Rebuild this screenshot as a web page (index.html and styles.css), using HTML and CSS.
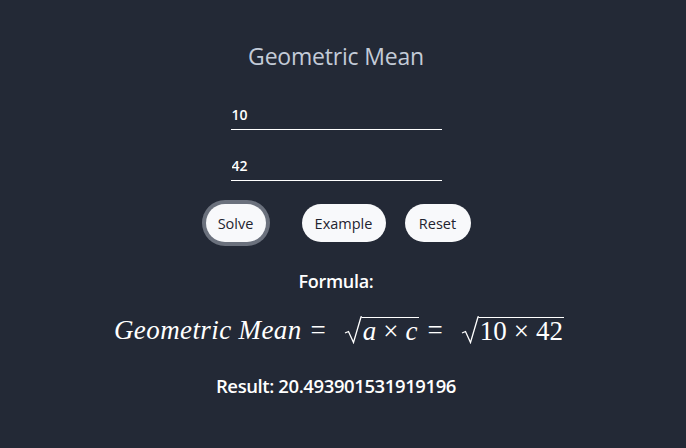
FILE: index.html
```html
<!DOCTYPE html>
<html>
<head>
<meta charset="utf-8">
<link rel="stylesheet" href="styles.css">
</head>
<body>
<main class="app">
  <h1 class="title">Geometric Mean</h1>
  <div class="fields">
    <input class="field" type="text" value="10">
    <input class="field" type="text" value="42">
  </div>
  <div class="actions">
    <button class="btn btn-focus">Solve</button>
    <button class="btn btn-example">Example</button>
    <button class="btn btn-reset">Reset</button>
  </div>
  <h2 class="formula-label">Formula:</h2>
  <div class="math">
    <span class="mi word">Geometric</span><span class="sp"></span><span class="mi word">Mean</span>
    <span class="rel">=</span>
    <span class="sqrt"><svg class="rad" viewBox="0 0 18 28" width="18" height="28"><path d="M1 17 L4.5 15.5 L9.5 26.5 L17 1 L18 1" fill="none" stroke="#fff" stroke-width="1.3"/></svg><span class="radicand"><span class="mi">a</span><span class="bin">×</span><span class="mi">c</span></span></span>
    <span class="rel">=</span>
    <span class="sqrt"><svg class="rad" viewBox="0 0 18 28" width="18" height="28"><path d="M1 17 L4.5 15.5 L9.5 26.5 L17 1 L18 1" fill="none" stroke="#fff" stroke-width="1.3"/></svg><span class="radicand"><span class="mn">10</span><span class="bin">×</span><span class="mn">42</span></span></span>
  </div>
  <p class="result">Result: 20.493901531919196</p>
</main>
</body>
</html>
```
FILE: styles.css
```css
html, body {
  margin: 0;
  padding: 0;
  background: #232936;
  height: 100%;
}
body {
  font-family: "Open Sans", "Noto Sans", sans-serif;
  color: #fff;
}
.app {
  display: flex;
  flex-direction: column;
  align-items: center;
  padding-top: 40px;
  padding-right: 14px;
}
.title {
  margin: 0;
  font-size: 23px;
  font-weight: 400;
  color: #c3cbd8;
  letter-spacing: -0.2px;
  line-height: 32px;
}
.fields {
  display: flex;
  flex-direction: column;
  gap: 18px;
  margin-top: 25px;
}
.field {
  width: 211px;
  box-sizing: border-box;
  background: transparent;
  border: none;
  border-bottom: 1px solid #fff;
  color: #fff;
  font-family: "Open Sans", sans-serif;
  font-size: 14px;
  font-weight: 600;
  padding: 7px 1px 4px;
  outline: none;
  height: 33px;
}
.actions {
  display: flex;
  align-items: center;
  margin-top: 23px;
}
.btn {
  background: #f8f9fb;
  border: none;
  border-radius: 19px;
  height: 38px;
  color: #1f2430;
  font-family: "Open Sans", sans-serif;
  font-size: 14.5px;
  padding: 0;
}
.btn-focus {
  width: 60px;
  margin-left: 4px;
  box-shadow: 0 0 0 4px #6b717d;
}
.btn-example {
  margin-left: 36px;
  width: 84px;
}
.btn-reset {
  margin-left: 19px;
  width: 66px;
}
.formula-label {
  margin: 27px 0 0;
  font-size: 18px;
  font-weight: 600;
  line-height: 24px;
  letter-spacing: -0.3px;
}
.math {
  display: flex;
  align-items: flex-end;
  margin-top: 22px;
  font-family: "Liberation Serif", serif;
  font-size: 27px;
  line-height: 30px;
  margin-left: 6px;
}
.mi {
  font-style: italic;
}
.word {
  letter-spacing: 0.4px;
}
.sp {
  width: 7px;
}
.rel {
  margin: 0 15px 0 9px;
}
.bin {
  margin: 0 7px;
}
.sqrt {
  display: flex;
  align-items: flex-end;
  margin-left: 3px;
}
.rad {
  display: block;
  margin-bottom: 1px;
}
.radicand {
  border-top: 1.3px solid #fff;
  line-height: 27px;
  padding: 0 1px;
}
.result {
  margin: 28px 0 0;
  font-size: 18.5px;
  font-weight: 600;
  letter-spacing: -0.4px;
}
```
